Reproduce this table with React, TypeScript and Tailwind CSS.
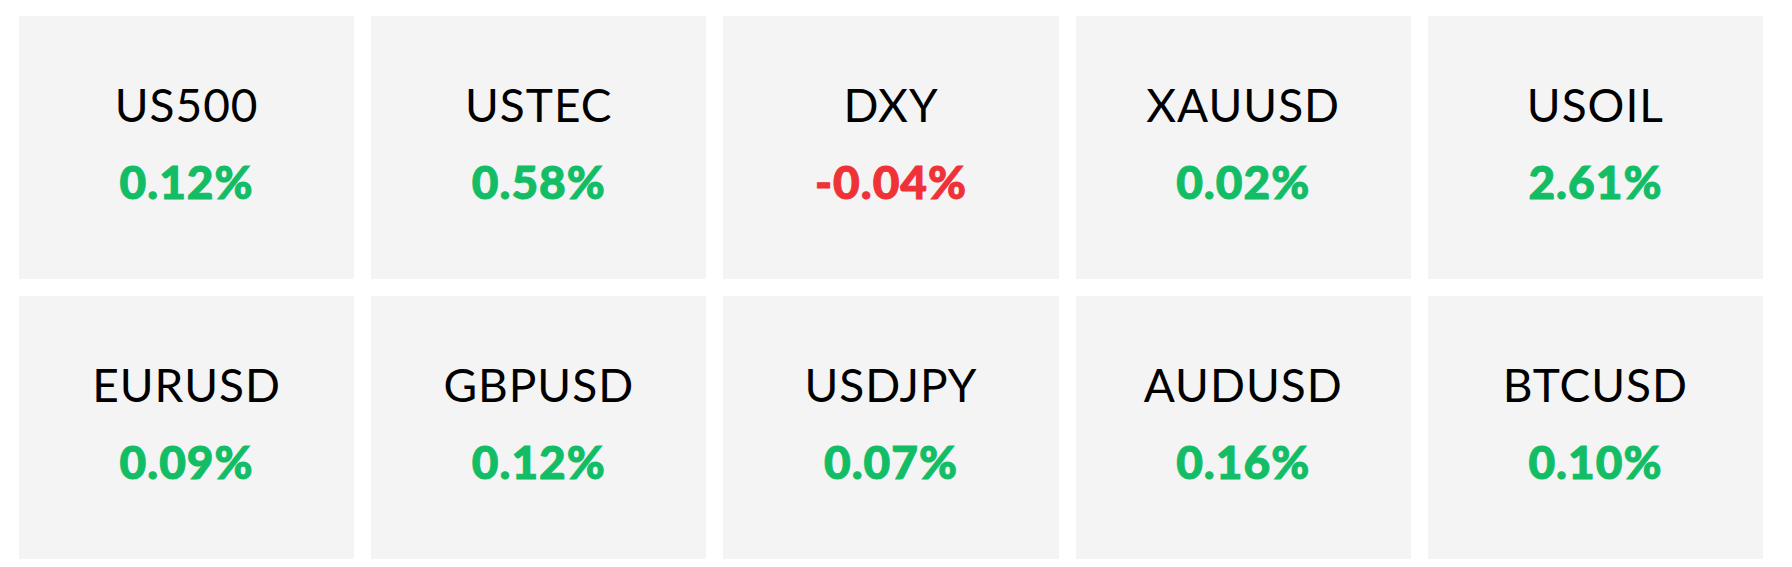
const quotes = [
  { symbol: "US500", change: 0.12 },
  { symbol: "USTEC", change: 0.58 },
  { symbol: "DXY", change: -0.04 },
  { symbol: "XAUUSD", change: 0.02 },
  { symbol: "USOIL", change: 2.61 },
  { symbol: "EURUSD", change: 0.09 },
  { symbol: "GBPUSD", change: 0.12 },
  { symbol: "USDJPY", change: 0.07 },
  { symbol: "AUDUSD", change: 0.16 },
  { symbol: "BTCUSD", change: 0.1 },
];

export default function App() {
  return (
    <div
      className="bg-white pt-[16px] pb-[7px] pl-[19px] pr-[29px]"
      style={{ fontFamily: "Lato, 'Open Sans', sans-serif" }}
    >
      <div className="grid grid-cols-5 gap-[17px]">
        {quotes.map((q) => (
          <div
            key={q.symbol}
            className="h-[263px] pb-[9px] bg-[#f4f4f4] flex flex-col items-center justify-center"
          >
            <div className="text-[46px] leading-none tracking-[1px] text-black">{q.symbol}</div>
            <div
              className={
                "mt-[31px] text-[46px] leading-none font-black tracking-[1px] [-webkit-text-stroke:1px_currentColor] " +
                (q.change < 0 ? "text-[#ee3237]" : "text-[#12bd66]")
              }
            >
              {q.change.toFixed(2)}%
            </div>
          </div>
        ))}
      </div>
    </div>
  );
}
